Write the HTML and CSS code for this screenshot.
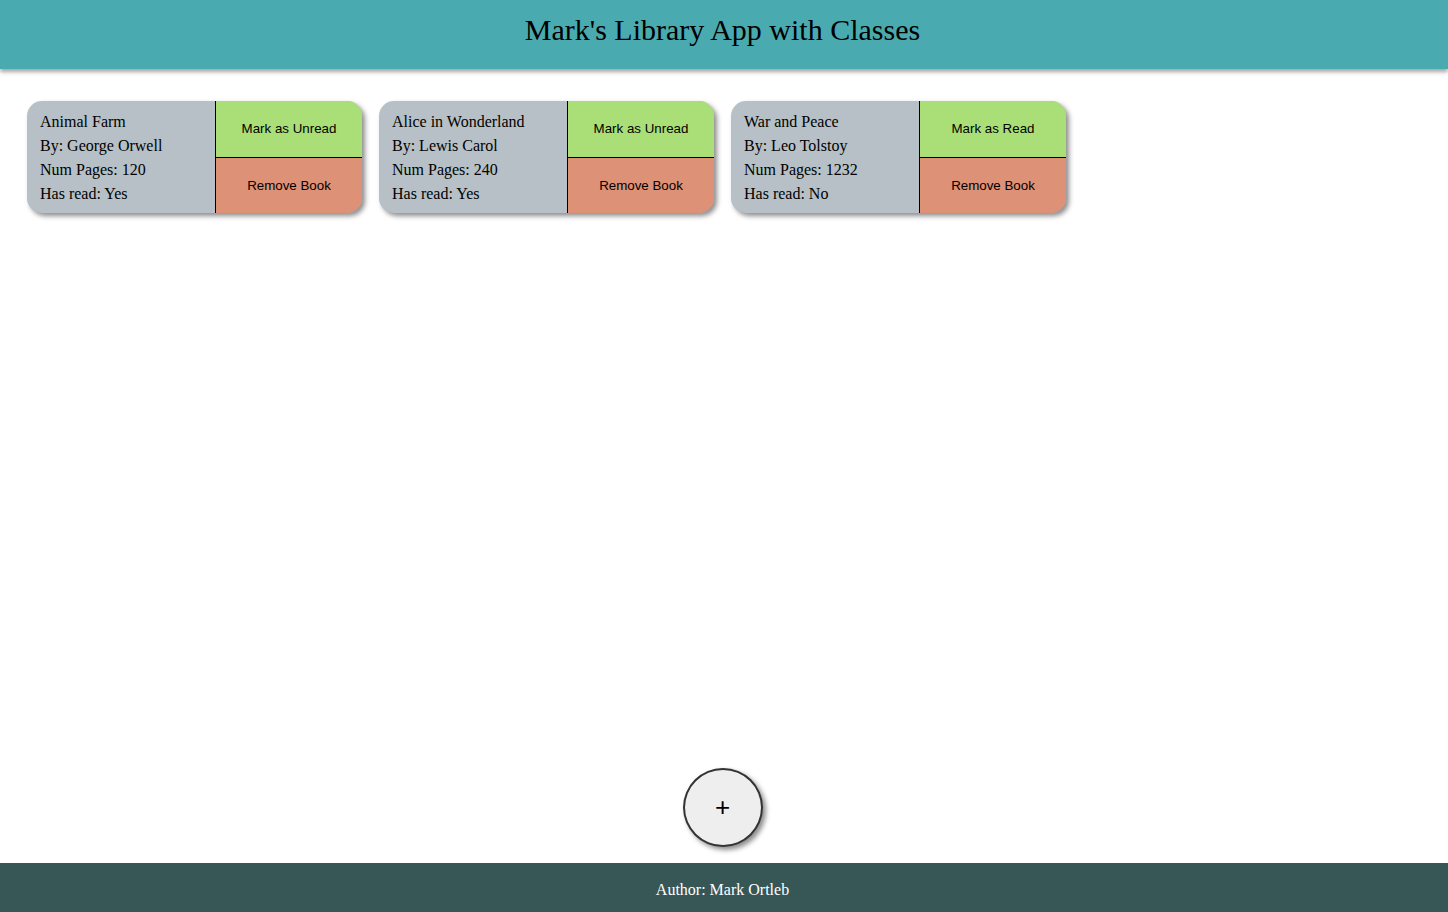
FILE: index.html
```html
<!DOCTYPE html>
<html lang="en">
<head>
<meta charset="utf-8">
<title>Mark's Library App with Classes</title>
<link rel="stylesheet" href="styles.css">
</head>
<body>
<header class="header">
  <h1 class="title">Mark's Library App with Classes</h1>
</header>
<main class="main">
  <section class="books">
    <div class="card">
      <div class="info">
        <div>Animal Farm</div>
        <div>By: George Orwell</div>
        <div>Num Pages: 120</div>
        <div>Has read: Yes</div>
      </div>
      <div class="actions">
        <button class="btn btn-read">Mark as Unread</button>
        <button class="btn btn-remove">Remove Book</button>
      </div>
    </div>
    <div class="card">
      <div class="info">
        <div>Alice in Wonderland</div>
        <div>By: Lewis Carol</div>
        <div>Num Pages: 240</div>
        <div>Has read: Yes</div>
      </div>
      <div class="actions">
        <button class="btn btn-read">Mark as Unread</button>
        <button class="btn btn-remove">Remove Book</button>
      </div>
    </div>
    <div class="card">
      <div class="info">
        <div>War and Peace</div>
        <div>By: Leo Tolstoy</div>
        <div>Num Pages: 1232</div>
        <div>Has read: No</div>
      </div>
      <div class="actions">
        <button class="btn btn-read">Mark as Read</button>
        <button class="btn btn-remove">Remove Book</button>
      </div>
    </div>
  </section>
  <div class="add-wrap">
    <button class="add-btn">+</button>
  </div>
</main>
<footer class="footer">Author: Mark Ortleb</footer>
</body>
</html>
```
FILE: styles.css
```css
html, body {
  margin: 0;
  padding: 0;
}
body {
  font-family: "Liberation Serif", "Times New Roman", serif;
  font-size: 16px;
  color: #000;
  background: #fff;
  min-height: 100vh;
  display: flex;
  flex-direction: column;
}
.header {
  background: #49aab0;
  height: 69px;
  display: flex;
  align-items: center;
  justify-content: center;
  box-shadow: 0 3px 4px rgba(0, 0, 0, 0.35);
  position: relative;
  z-index: 1;
}
.title {
  margin: 0;
  font-size: 30px;
  font-weight: normal;
  line-height: 1;
  padding-bottom: 9px;
  padding-right: 3px;
}
.main {
  flex: 1;
  display: flex;
  flex-direction: column;
  justify-content: space-between;
  padding: 32px 27px 16px;
}
.books {
  display: flex;
  gap: 17px;
  flex-wrap: wrap;
}
.card {
  width: 335px;
  height: 112px;
  display: flex;
  background: #b6c0c6;
  border-radius: 15px;
  overflow: hidden;
  box-shadow: 3px 3px 5px rgba(0, 0, 0, 0.45);
}
.info {
  width: 188px;
  box-sizing: border-box;
  padding: 9px 13px 7px;
  line-height: 24px;
}
.actions {
  flex: 1;
  display: flex;
  flex-direction: column;
  border-left: 1px solid #000;
}
.btn {
  flex: 1;
  margin: 0;
  border: none;
  font-family: "Liberation Sans", Arial, sans-serif;
  font-size: 13.333px;
  color: #000;
  padding: 0;
  cursor: pointer;
}
.btn-read {
  background: #aade77;
  border-bottom: 1px solid #000;
}
.btn-remove {
  background: #dd9177;
}
.add-wrap {
  display: flex;
  justify-content: center;
}
.add-btn {
  width: 80px;
  height: 79px;
  border-radius: 50%;
  border: 2px solid #333;
  background: #eeeeee;
  font-family: "Liberation Sans", Arial, sans-serif;
  font-size: 26px;
  line-height: 1;
  padding: 0 0 1px;
  color: #000;
  box-shadow: 3px 3px 5px rgba(0, 0, 0, 0.45);
  margin-left: -3px;
}
.footer {
  background: #375757;
  color: #fff;
  height: 49px;
  box-sizing: border-box;
  padding: 4px 3px 0 0;
  display: flex;
  align-items: center;
  justify-content: center;
}
```
